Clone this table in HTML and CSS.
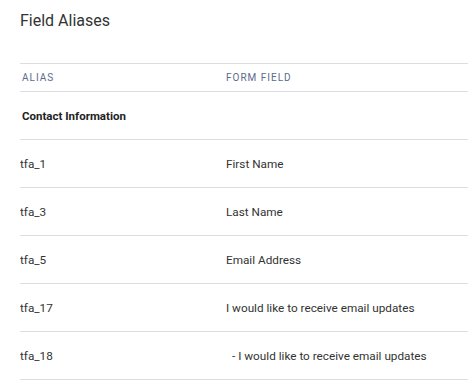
FILE: index.html
```html
<!DOCTYPE html>
<html lang="en">
<head>
  <meta charset="UTF-8" />
  <title>Field Aliases</title>
  <link rel="stylesheet" href="styles.css">
</head>
<body>
  <!-- Field aliases panel -->
  <div class="panel">
    <h2 class="panel-title">Field Aliases</h2>

    <table class="alias-table">
      <thead>
        <tr>
          <th class="col-alias">Alias</th>
          <th>Form Field</th>
        </tr>
      </thead>
      <tbody>
        <tr class="group-row">
          <td colspan="2">Contact Information</td>
        </tr>
        <tr>
          <td>tfa_1</td>
          <td>First Name</td>
        </tr>
        <tr>
          <td>tfa_3</td>
          <td>Last Name</td>
        </tr>
        <tr>
          <td>tfa_5</td>
          <td>Email Address</td>
        </tr>
        <tr>
          <td>tfa_17</td>
          <td>I would like to receive email updates</td>
        </tr>
        <tr>
          <td>tfa_18</td>
          <td class="sub-field">- I would like to receive email updates</td>
        </tr>
      </tbody>
    </table>
  </div>
</body>
</html>
```

FILE: styles.css
```css
* {
  margin: 0;
  padding: 0;
  box-sizing: border-box;
}

body {
  font-family: Roboto, "Liberation Sans", sans-serif;
  background-color: #fff;
  color: #333;
}

/* Panel */
.panel {
  padding: 11px 0 0 20px;
}

.panel-title {
  font-size: 16px;
  font-weight: 400;
  line-height: 20px;
  color: #333;
  margin-bottom: 32px;
}

/* Table */
.alias-table {
  width: 100%;
  border-collapse: collapse;
  border-top: 1px solid #dcdce3;
}

.alias-table th {
  height: 28px;
  text-align: left;
  font-size: 10px;
  font-weight: 400;
  letter-spacing: 1px;
  text-transform: uppercase;
  color: #5b6b8c;
  border-bottom: 1px solid #dcdce3;
  padding: 0;
}

.alias-table th.col-alias {
  width: 206px;
  padding-left: 2px;
}

.alias-table td {
  height: 48px;
  font-size: 11.75px;
  color: #333;
  border-bottom: 1px solid #dcdce3;
  padding: 0;
  vertical-align: middle;
}

.alias-table .group-row td {
  padding-left: 2px;
  font-weight: 700;
  font-size: 11.5px;
  color: #222;
}

.alias-table td.sub-field {
  padding-left: 6px;
}
```
